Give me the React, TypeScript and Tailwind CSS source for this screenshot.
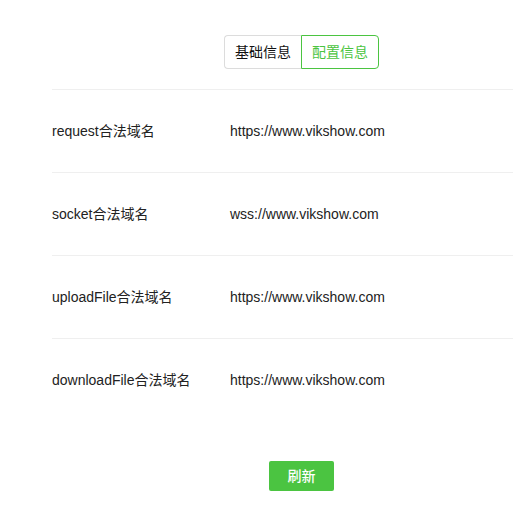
import { useState } from "react";

const rows = [
  { label: "request合法域名", value: "https://www.vikshow.com" },
  { label: "socket合法域名", value: "wss://www.vikshow.com" },
  { label: "uploadFile合法域名", value: "https://www.vikshow.com" },
  { label: "downloadFile合法域名", value: "https://www.vikshow.com" },
];

export default function App() {
  const [tab, setTab] = useState(1);
  const tabs = ["基础信息", "配置信息"];

  return (
    <div
      className="w-full overflow-hidden bg-white min-h-[531px] text-[14px] text-[#222]"
      style={{ fontFamily: '"Liberation Sans", "Noto Sans CJK SC", sans-serif' }}
    >
      <div className="ml-[52px] w-[499px]">
        <div className="flex justify-center pt-[35px]">
          <div className="flex">
            {tabs.map((t, i) => (
              <button
                key={t}
                onClick={() => setTab(i)}
                className={
                  i === tab
                    ? "h-[34px] px-[10px] border border-[#4bc441] text-[#4bc441] leading-none " +
                      (i === 0 ? "rounded-l-[4px]" : "rounded-r-[4px]")
                    : "h-[34px] px-[10px] border border-[#dcdcdc] text-[#111] leading-none " +
                      (i === 0 ? "rounded-l-[4px] border-r-0" : "rounded-r-[4px] border-l-0")
                }
              >
                {t}
              </button>
            ))}
          </div>
        </div>

        <div className="mt-[20px]">
          {rows.map((r) => (
            <div
              key={r.label}
              className="flex items-center h-[83px] border-t border-[#efefef]"
            >
              <div className="w-[178px] shrink-0">{r.label}</div>
              <div>{r.value}</div>
            </div>
          ))}
        </div>

        <div className="flex justify-center mt-[40px]">
          <button className="w-[65px] h-[30px] bg-[#4bc441] text-white font-medium rounded-[2px] leading-none">
            刷新
          </button>
        </div>
      </div>
    </div>
  );
}
